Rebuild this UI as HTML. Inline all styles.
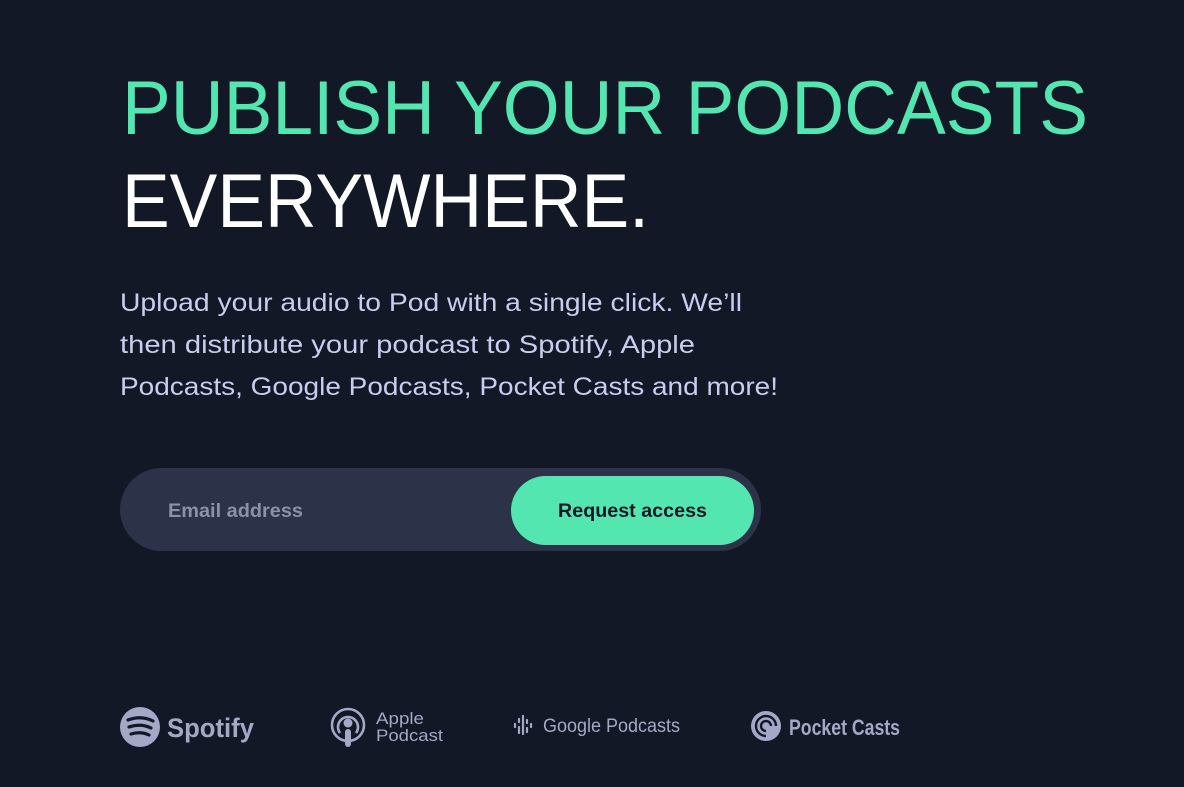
<!DOCTYPE html>
<html><head><meta charset="utf-8"><style>
html,body{margin:0;padding:0;background:#121826;width:1184px;height:787px;overflow:hidden;font-family:"Liberation Sans",sans-serif}
svg{position:absolute;left:0;top:0}
</style></head><body>
<svg width="1184" height="787" viewBox="0 0 1184 787">
<rect width="1184" height="787" fill="#121826"/>
<text x="122" y="134" font-size="76" fill="#54e6b0" textLength="966" lengthAdjust="spacingAndGlyphs" font-family="Liberation Sans">PUBLISH YOUR PODCASTS</text>
<text x="122" y="227" font-size="76" fill="#ffffff" textLength="527" lengthAdjust="spacingAndGlyphs" font-family="Liberation Sans">EVERYWHERE.</text>
<g fill="#c7cdee" font-size="25" font-family="Liberation Sans">
<text x="120" y="311" textLength="622" lengthAdjust="spacingAndGlyphs">Upload your audio to Pod with a single click. We’ll</text>
<text x="120" y="353" textLength="575" lengthAdjust="spacingAndGlyphs">then distribute your podcast to Spotify, Apple</text>
<text x="120" y="395" textLength="658" lengthAdjust="spacingAndGlyphs">Podcasts, Google Podcasts, Pocket Casts and more!</text>
</g>
<rect x="120" y="468" width="641" height="83" rx="41.5" fill="#2c3349"/>
<text x="168" y="517" font-size="19" font-weight="bold" fill="#8c91a6" textLength="135" lengthAdjust="spacingAndGlyphs">Email address</text>
<rect x="511" y="476" width="243" height="69" rx="34.5" fill="#53e6b1"/>
<text x="558" y="517" font-size="19" font-weight="bold" fill="#121826" textLength="149" lengthAdjust="spacingAndGlyphs">Request access</text>
<g fill="#a3a8c6">
<circle cx="140" cy="727" r="20"/>
<g stroke="#121826" stroke-width="3.2" fill="none" stroke-linecap="round">
<path d="M128 720 Q141 715 153 721"/><path d="M129 727 Q141 723 151 728"/><path d="M131 734 Q141 731 149 735"/>
</g>
<text x="167" y="737" font-size="27" font-weight="bold" textLength="87" lengthAdjust="spacingAndGlyphs">Spotify</text>
<g fill="none" stroke="#a3a8c6" stroke-width="2.6"><circle cx="348" cy="725" r="16"/><path d="M340 733 A10 10 0 1 1 356 733"/></g>
<circle cx="348" cy="723" r="4.5"/><rect x="345" y="729" width="6" height="18" rx="3"/>
<text x="376" y="724" font-size="17" textLength="48" lengthAdjust="spacingAndGlyphs">Apple</text>
<text x="376" y="741" font-size="17" textLength="67" lengthAdjust="spacingAndGlyphs">Podcast</text>
<g stroke="#a3a8c6" stroke-width="2.2" stroke-linecap="round">
<path d="M515 724v3"/><path d="M519 719v3M519 727v6"/><path d="M523 716v18"/><path d="M527 720v3M527 728v4"/><path d="M531 724v3"/>
</g>
<text x="543" y="732" font-size="19" textLength="137" lengthAdjust="spacingAndGlyphs">Google Podcasts</text>
<circle cx="766" cy="726" r="15"/>
<g fill="none" stroke="#121826" stroke-width="2.4"><path d="M766 736 A10 10 0 1 1 776 726"/><path d="M766 731 A5 5 0 1 1 771 726"/></g>
<text x="789" y="735" font-size="22" font-weight="bold" textLength="111" lengthAdjust="spacingAndGlyphs">Pocket Casts</text>
</g>
</svg>
</body></html>
